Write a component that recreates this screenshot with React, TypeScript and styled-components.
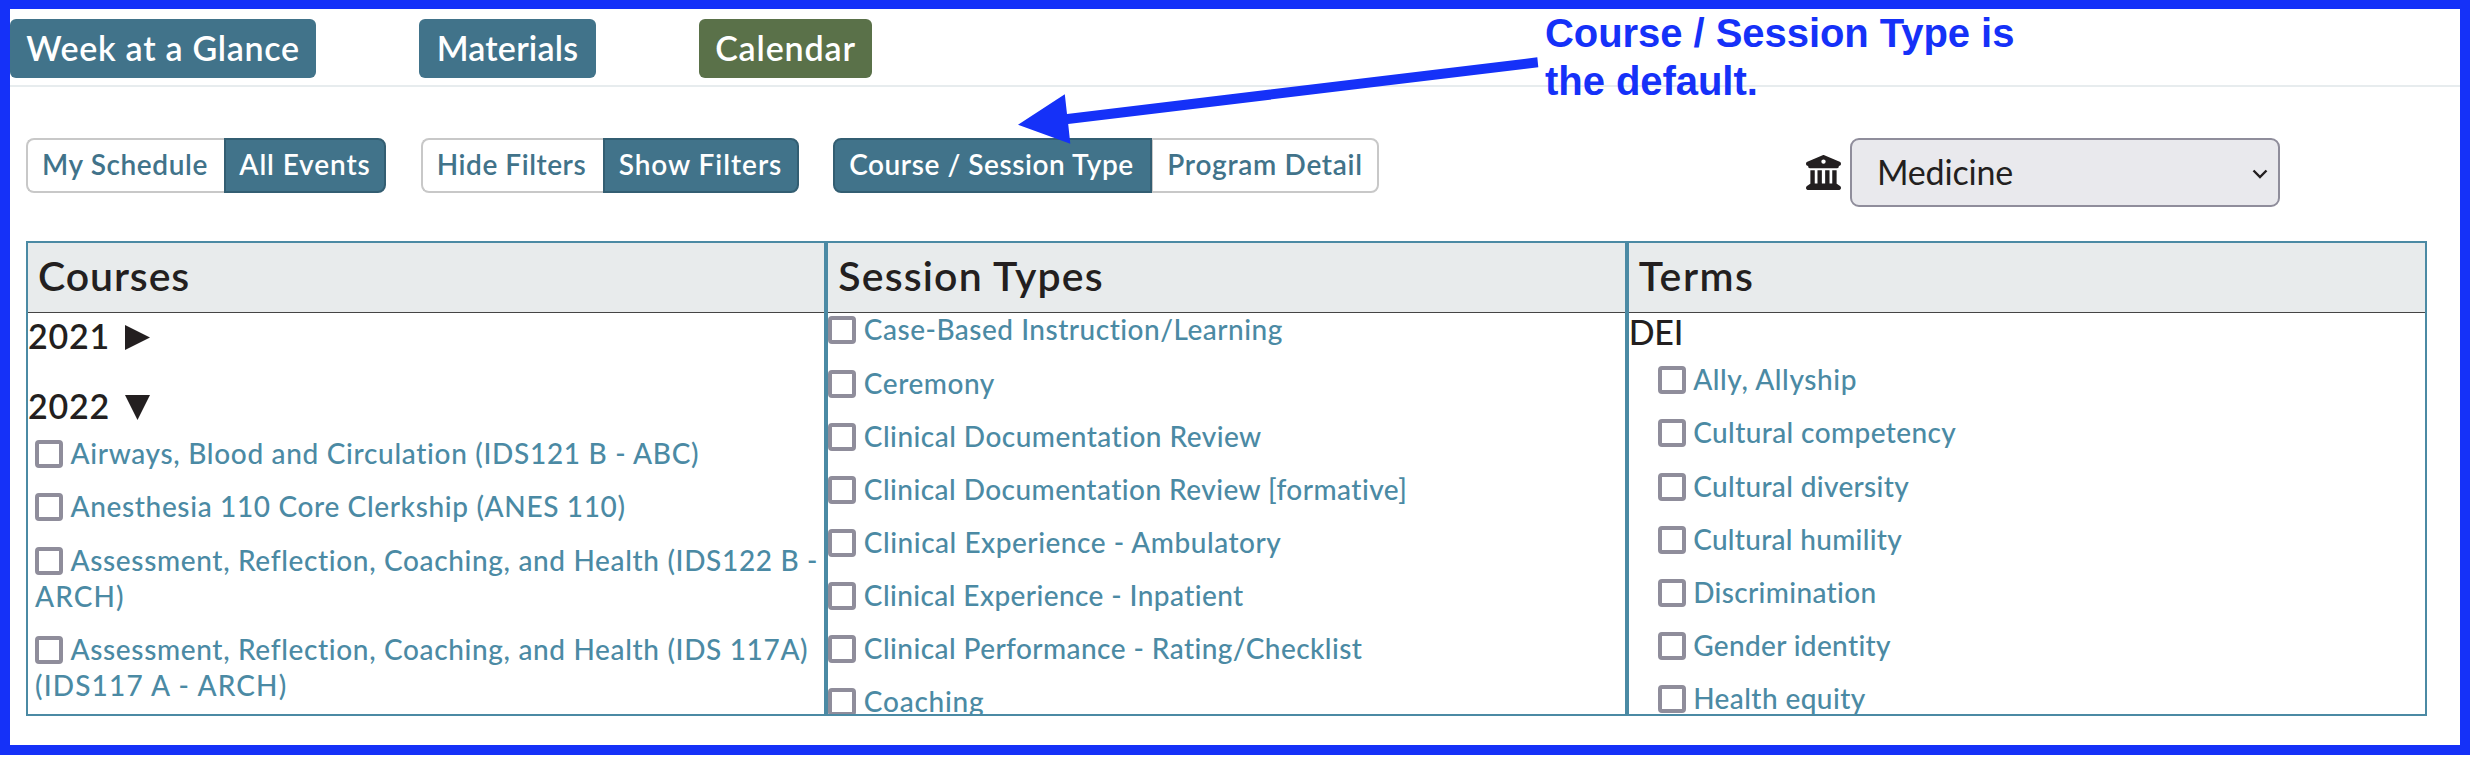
import React from "react";
import styled, { createGlobalStyle, css } from "styled-components";
import { FaBuildingColumns } from "react-icons/fa6";

const blue = "#1531f8";
const teal = "#41738a";
const link = "#4b8aa4";
const ink = "#231f20";

const GlobalStyle = createGlobalStyle`
  * { box-sizing: border-box; }
  body { margin: 0; background: #fff; font-family: Lato, "Open Sans", sans-serif; }
`;

const Frame = styled.main`
  position: relative;
  width: 2470px;
  height: 755px;
  border: 10px solid ${blue};
  border-top-width: 9px;
  background: #fff;
  color: ${ink};
  overflow: hidden;
`;

const Track = styled.span<{ $t?: number }>`
  letter-spacing: ${(p) => p.$t ?? 0}px;
`;

const Nav = styled.nav`
  display: flex;
  align-items: flex-start;
  gap: 103px;
  height: 78px;
  padding-top: 10px;
  border-bottom: 2px solid #e7ecee;
`;

const NavButton = styled.button<{ $w: number; $active?: boolean }>`
  width: ${(p) => p.$w}px;
  height: 59px;
  padding: 0 0 2px;
  border: 0;
  border-radius: 6px;
  background: ${(p) => (p.$active ? "#5a7149" : teal)};
  color: #fff;
  font: 600 34px/56px Lato, sans-serif;
  white-space: nowrap;
`;

const Toolbar = styled.div`
  display: flex;
  align-items: flex-start;
  padding: 51px 180px 34px 16px;
`;

const Group = styled.div`
  display: flex;
  margin-right: 34.5px;
`;

const Segment = styled.button<{ $w: number; $on?: boolean }>`
  width: ${(p) => p.$w}px;
  height: 55px;
  padding: 0 0 4px;
  border: 2px solid #c8c8c8;
  background: #fff;
  color: ${teal};
  font: 600 28px/46px Lato, sans-serif;
  white-space: nowrap;
  &:first-child { border-radius: 8px 0 0 8px; border-right-width: ${(p) => (p.$on ? 2 : 0)}px; padding-right: 2px; }
  &:last-child { border-radius: 0 8px 8px 0; border-left-width: ${(p) => (p.$on ? 2 : 1)}px; }
  ${(p) =>
    p.$on &&
    css`
      background: ${teal};
      border-color: #335e72;
      color: #fff;
    `}
`;

const School = styled.div`
  display: flex;
  align-items: flex-start;
  margin-left: auto;
`;

const SchoolIcon = styled(FaBuildingColumns)`
  width: 35px;
  height: 35px;
  margin: 17px 9px 0 0;
`;

const Select = styled.div`
  display: flex;
  align-items: center;
  justify-content: space-between;
  width: 430px;
  height: 69px;
  padding: 0 10px 1px 25px;
  border: 2px solid #8f8d9b;
  border-radius: 9px;
  background: #e9e9ed;
  font-size: 34px;
  line-height: 60px;
`;

const Chevron = styled.svg`
  width: 16px;
  height: 10px;
  margin-top: 3px;
  fill: none;
  stroke: ${ink};
  stroke-width: 2.4;
`;

const Filters = styled.section`
  display: grid;
  grid-template-columns: repeat(3, 1fr);
  width: 2401px;
  height: 475px;
  margin-left: 16px;
`;

const Column = styled.div`
  border: 2px solid ${link};
  overflow: hidden;
`;

const ColumnTitle = styled.h2`
  height: 70px;
  margin: 0;
  padding-left: 10px;
  border-bottom: 1px solid #454545;
  background: #e8ebec;
  font-size: 41px;
  font-weight: 600;
  line-height: 66px;
`;

const Year = styled.div`
  display: flex;
  align-items: center;
  gap: 15px;
  height: 46px;
  font-size: 34px;
  font-weight: 600;
  line-height: 46px;
  & + & { margin-top: 24px; }
`;

const Triangle = styled.svg<{ $open?: boolean }>`
  width: 25px;
  height: 25px;
  margin-top: 2px;
  fill: ${ink};
  transform: rotate(${(p) => (p.$open ? 90 : 0)}deg);
`;

const TermGroup = styled.div`
  font-size: 34px;
  font-weight: 500;
  line-height: 37px;
`;

const List = styled.ul<{ $top: number; $left: number }>`
  margin: ${(p) => p.$top}px 0 0;
  padding: 0 0 0 ${(p) => p.$left}px;
  list-style: none;
`;

const Item = styled.li`
  margin-bottom: 17.1px;
  color: ${link};
  font-size: 28px;
  font-weight: 500;
  line-height: 36px;
  white-space: nowrap;
`;

const Box = styled.input.attrs({ type: "checkbox" })`
  appearance: none;
  width: 28px;
  height: 28px;
  margin: 0 7.5px 0 0;
  border: 4px solid #8f8d9b;
  border-radius: 4px;
  background: #fff;
  vertical-align: -4px;
`;

const Note = styled.p`
  position: absolute;
  top: 0;
  left: 1535px;
  margin: 0;
  color: ${blue};
  font: bold 40px/48px "Liberation Sans", Arial, sans-serif;
  letter-spacing: -0.05px;
  white-space: nowrap;
`;

const Arrow = styled.svg`
  position: absolute;
  top: 41px;
  left: 990px;
  width: 550px;
  height: 100px;
  fill: ${blue};
`;

type Line = [string, number];

const courses: Line[][] = [
  [["Airways, Blood and Circulation (IDS121 B - ABC)", 0.68]],
  [["Anesthesia 110 Core Clerkship (ANES 110)", 0.65]],
  [["Assessment, Reflection, Coaching, and Health (IDS122 B -", 0.65], ["ARCH)", 1.1]],
  [["Assessment, Reflection, Coaching, and Health (IDS 117A)", 0.65], ["(IDS117 A - ARCH)", 1.15]],
];

const sessionTypes: Line[][] = [
  [["Case-Based Instruction/Learning", 0.5]],
  [["Ceremony", 0.55]],
  [["Clinical Documentation Review", 0.47]],
  [["Clinical Documentation Review [formative]", 0.45]],
  [["Clinical Experience - Ambulatory", 0.53]],
  [["Clinical Experience - Inpatient", 0.41]],
  [["Clinical Performance - Rating/Checklist", 0.43]],
  [["Coaching", 0.75]],
];

const terms: Line[][] = [
  [["Ally, Allyship", 0.6]],
  [["Cultural competency", 0.4]],
  [["Cultural diversity", 0.35]],
  [["Cultural humility", 0.3]],
  [["Discrimination", 0.35]],
  [["Gender identity", 0.35]],
  [["Health equity", 0.42]],
];

function Checklist({ items, top, left }: { items: Line[][]; top: number; left: number }) {
  return (
    <List $top={top} $left={left}>
      {items.map((lines) => (
        <Item key={lines.map((l) => l[0]).join(" ")}>
          <Box />
          {lines.map(([text, t], i) => (
            <React.Fragment key={text}>
              {i > 0 && <br />}
              <Track $t={t}>{text}</Track>
            </React.Fragment>
          ))}
        </Item>
      ))}
    </List>
  );
}

function Disclosure({ open }: { open?: boolean }) {
  return (
    <Triangle $open={open} viewBox="0 0 25 25">
      <path d="M0 0L25 12.5L0 25Z" />
    </Triangle>
  );
}

export default function App() {
  return (
    <>
      <GlobalStyle />
      <Frame>
        <Nav>
          <NavButton $w={306}><Track $t={0.7}>Week at a Glance</Track></NavButton>
          <NavButton $w={177}><Track $t={0.2}>Materials</Track></NavButton>
          <NavButton $w={173} $active><Track $t={0.85}>Calendar</Track></NavButton>
        </Nav>

        <Toolbar>
          <Group>
            <Segment $w={198}><Track $t={0.6}>My Schedule</Track></Segment>
            <Segment $w={162} $on><Track $t={0.9}>All Events</Track></Segment>
          </Group>
          <Group>
            <Segment $w={182}><Track $t={0.55}>Hide Filters</Track></Segment>
            <Segment $w={196} $on><Track $t={0.95}>Show Filters</Track></Segment>
          </Group>
          <Group>
            <Segment $w={319} $on><Track $t={0.55}>Course / Session Type</Track></Segment>
            <Segment $w={227}><Track $t={0.7}>Program Detail</Track></Segment>
          </Group>
          <School>
            <SchoolIcon />
            <Select>
              <Track $t={-0.2}>Medicine</Track>
              <Chevron viewBox="0 0 16 10"><path d="M1.5 1.5L8 8L14.5 1.5" /></Chevron>
            </Select>
          </School>
        </Toolbar>

        <Filters>
          <Column>
            <ColumnTitle><Track $t={0.9}>Courses</Track></ColumnTitle>
            <Year><Track $t={0.8}>2021</Track> <Disclosure /></Year>
            <Year><Track $t={0.8}>2022</Track> <Disclosure open /></Year>
            <Checklist items={courses} top={6.4} left={7} />
          </Column>
          <Column>
            <ColumnTitle><Track $t={1.15}>Session Types</Track></ColumnTitle>
            <Checklist items={sessionTypes} top={-1.6} left={0} />
          </Column>
          <Column>
            <ColumnTitle><Track $t={1.5}>Terms</Track></ColumnTitle>
            <TermGroup><Track $t={-0.2}>DEI</Track></TermGroup>
            <Checklist items={terms} top={11.4} left={29} />
          </Column>
        </Filters>

        <Arrow viewBox="1000 50 550 100">
          <path d="M1018 124.7L1064.8 94.3L1067 114L1537.3 57.3L1538.3 67.2L1068.2 124L1070.3 143.7Z" />
        </Arrow>
        <Note>
          Course / Session Type is
          <br />
          the default.
        </Note>
      </Frame>
    </>
  );
}
